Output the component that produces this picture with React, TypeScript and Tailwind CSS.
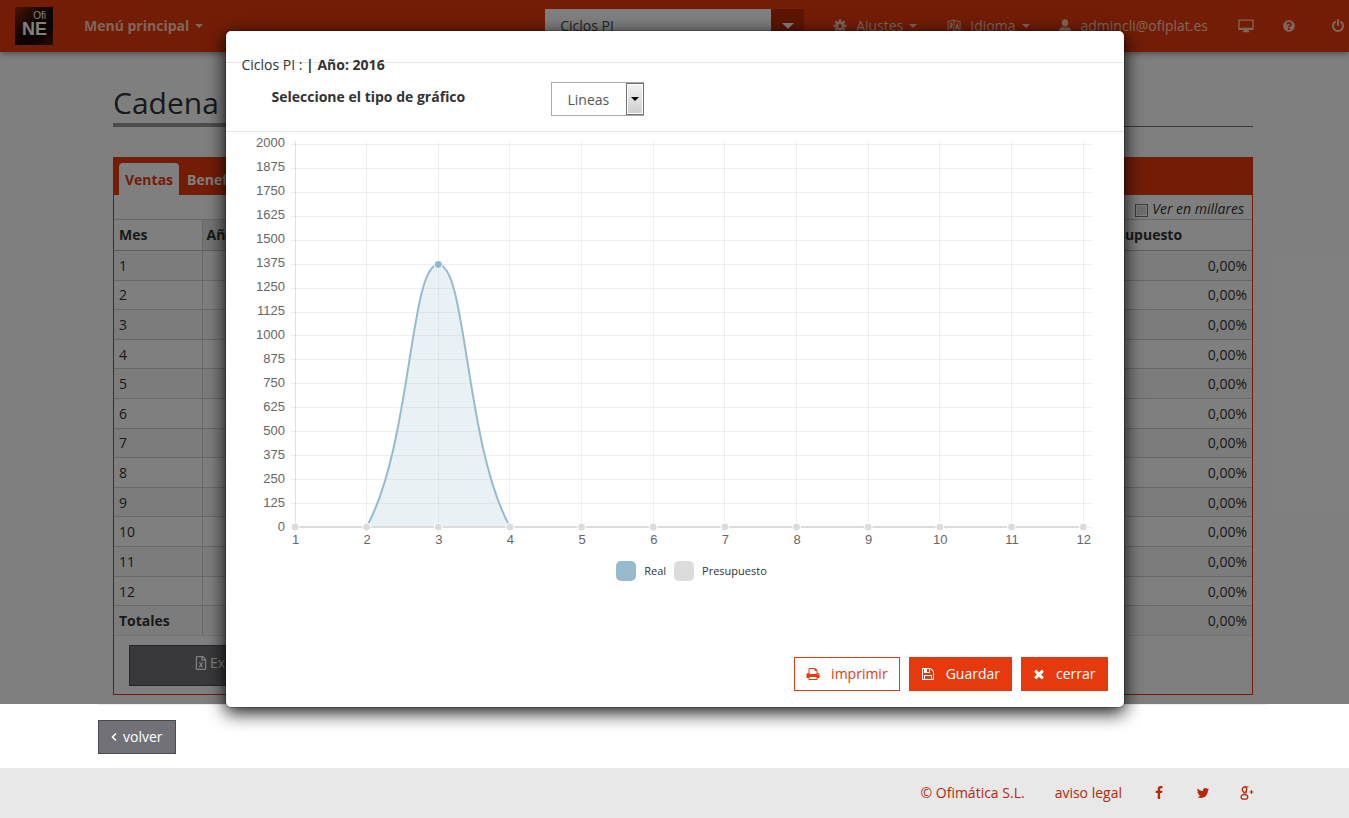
import React, { useState } from 'react';
import { FaQuestionCircle, FaRegFileExcel } from 'react-icons/fa';

const months = ['1', '2', '3', '4', '5', '6', '7', '8', '9', '10', '11', '12'];
const headings = ['Mes', 'Año', 'Presupuesto'];

// chart geometry, in the units of its own viewBox
const LEFT = 53;
const BOTTOM = 395;
const X_STEP = 71.65;
const Y_STEP = 23.94;
const ticks = Array.from({ length: 17 }, (_, i) => i * 125);
const xAt = (i: number) => LEFT + i * X_STEP;
const yAt = (value: number) => BOTTOM - (value / 125) * Y_STEP;

interface GlyphProps {
  d: string;
  className?: string;
}

const Glyph: React.FC<GlyphProps> = ({ d, className = 'size-[14px]' }) => (
  <svg viewBox="0 0 1792 1792" className={className} fill="currentColor" aria-hidden="true">
    <path d={d} />
  </svg>
);

const paths = {
  facebook:
    'M1343 12v264h-157q-86 0-116 36t-30 108v189h293l-39 296h-254v759h-306v-759h-255v-296h255v-218q0-186 104-288.5t277-102.5q147 0 228 12z',
  twitter:
    'M1684 408q-67 98-162 167 1 14 1 42 0 130-38 259.5t-115.5 248.5-184.5 210.5-258 146-323 54.5q-271 0-496-145 35 4 78 4 225 0 401-138-105-2-188-64.5t-114-159.5q33 5 61 5 43 0 85-11-112-23-185.5-111.5t-73.5-205.5v-4q68 38 146 41-66-44-105-115t-39-154q0-88 44-163 121 149 294.5 238.5t371.5 99.5q-8-38-8-74 0-134 94.5-228.5t228.5-94.5q140 0 236 102 109-21 205-78-37 115-142 178 93-10 186-50z',
  print:
    'M448 1536h896v-256h-896v256zm0-640h896v-384h-160q-40 0-68-28t-28-68v-160h-640v640zm1152 64q0-26-19-45t-45-19-45 19-19 45 19 45 45 19 45-19 19-45zm128 0v416q0 13-9.5 22.5t-22.5 9.5h-224v160q0 40-28 68t-68 28h-960q-40 0-68-28t-28-68v-160h-224q-13 0-22.5-9.5t-9.5-22.5v-416q0-79 56.5-135.5t135.5-56.5h64v-544q0-40 28-68t68-28h672q40 0 88 20t76 48l152 152q28 28 48 76t20 88v256h64q79 0 135.5 56.5t56.5 135.5z',
  save:
    'M512 1536h768v-384h-768v384zm896 0h128v-896q0-14-10-38.5t-20-34.5l-281-281q-10-10-34-20t-39-10v416q0 40-28 68t-68 28h-576q-40 0-68-28t-28-68v-416h-128v1280h128v-416q0-40 28-68t68-28h832q40 0 68 28t28 68v416zm-384-928v-320q0-13-9.5-22.5t-22.5-9.5h-192q-13 0-22.5 9.5t-9.5 22.5v320q0 13 9.5 22.5t22.5 9.5h192q13 0 22.5-9.5t9.5-22.5zm640 32v928q0 40-28 68t-68 28h-1344q-40 0-68-28t-28-68v-1344q0-40 28-68t68-28h928q40 0 88 20t76 48l280 280q28 28 48 76t20 88z',
  times:
    'M1490 1322q0 40-28 68l-136 136q-28 28-68 28t-68-28l-294-294-294 294q-28 28-68 28t-68-28l-136-136q-28-28-28-68t28-68l294-294-294-294q-28-28-28-68t28-68l136-136q28-28 68-28t68 28l294 294 294-294q28-28 68-28t68 28l136 136q28 28 28 68t-28 68l-294 294 294 294q28 28 28 68z',
  power:
    'M1664 896q0 156-61 298t-164 245-245 164-298 61-298-61-245-164-164-245-61-298q0-182 80.5-343t226.5-270q43-32 95.5-25t83.5 50q32 42 24.5 94.5t-49.5 84.5q-98 74-151.5 181t-53.5 228q0 104 40.5 198.5t109.5 163.5 163.5 109.5 198.5 40.5 198.5-40.5 163.5-109.5 109.5-163.5 40.5-198.5q0-121-53.5-228t-151.5-181q-42-32-49.5-84.5t24.5-94.5q31-43 84-50t95 25q146 109 226.5 270t80.5 343zm-640-768v640q0 52-38 90t-90 38-90-38-38-90v-640q0-52 38-90t90-38 90 38 38 90z',
};

const Caret = () => (
  <svg viewBox="0 0 8 4" className="h-1 w-2 shrink-0" fill="currentColor" aria-hidden="true">
    <path d="M0 0h8L4 4z" />
  </svg>
);

const CogIcon = () => (
  <svg viewBox="0 0 14 14" className="size-[14px]" fill="none" stroke="currentColor" aria-hidden="true">
    <circle cx="7" cy="7" r="3.3" strokeWidth="2.8" />
    <path
      d="M7 .5v2M7 11.5v2M.5 7h2M11.5 7h2M2.4 2.4l1.5 1.5M10.1 10.1l1.5 1.5M2.4 11.6l1.5-1.5M10.1 3.9l1.5-1.5"
      strokeWidth="2.4"
    />
  </svg>
);

const LanguageIcon = () => (
  <svg viewBox="0 0 14 14" className="size-[14px]" fill="none" stroke="currentColor" aria-hidden="true">
    <path d="M1 2.500l6-1.500v10.500l-6 1.500zM7 1.500l6 1v10.500l-6-2" />
    <path d="M2.500 5l3-1M4 3.500v2M5.300 5c-.5 2-1.500 3.500-3 4.500M2.800 6.500l2.600 2.500M8.800 10l1.400-5 1.600 6M9 8.500l2.400.5" strokeWidth="1.200" />
  </svg>
);

const UserIcon = () => (
  <svg viewBox="0 0 14 14" className="size-[14px]" fill="currentColor" aria-hidden="true">
    <ellipse cx="7" cy="4" rx="3.200" ry="3.700" />
    <path d="M1 13.500v-2.500c0-1.500 2-2.500 3.500-3 1 1 4 1 5 0 1.500.5 3.500 1.500 3.500 3v2.500z" />
  </svg>
);

const MonitorIcon = () => (
  <svg viewBox="0 0 16 14" className="h-[14px] w-4" fill="currentColor" aria-hidden="true">
    <path fillRule="evenodd" d="M1 .5h14a.7.7 0 0 1 .7.7v9a.7.7 0 0 1-.7.7h-4.700v1h1.200v1.300h-7v-1.300h1.200v-1H1a.7.7 0 0 1-.7-.7v-9A.7.7 0 0 1 1 .5zM1.600 1.800v7h12.800v-7z" />
  </svg>
);

const GooglePlusIcon = () => (
  <svg viewBox="0 0 14 14" className="size-[14px]" fill="none" stroke="currentColor" aria-hidden="true">
    <ellipse cx="4.500" cy="3.600" rx="2.200" ry="2.700" strokeWidth="1.300" />
    <path d="M4 .9h4.500M6 5.800c1 1 .5 1.500-.7 2.200M4.600 6.400c-1.200.8-.8 1.500.4 2.100" strokeWidth="1" />
    <ellipse cx="4.400" cy="10.900" rx="3.400" ry="2.300" strokeWidth="1.200" />
    <path d="M9.500 6h4M11.500 4v4" strokeWidth="1" />
  </svg>
);

const Logo = () => (
  <svg viewBox="0 0 38 38" className="size-[38px]" role="img" aria-label="Ofi NE">
    <defs>
      <linearGradient id="logo" x1="0" y1="0" x2="1" y2="1">
        <stop offset="0" stopColor="#8a2a12" />
        <stop offset="0.45" stopColor="#240802" />
        <stop offset="0.7" stopColor="#180400" />
        <stop offset="1" stopColor="#501808" />
      </linearGradient>
    </defs>
    <rect width="38" height="38" rx="1" fill="url(#logo)" />
    <g fill="#fff" fontFamily="Liberation Sans, sans-serif" textAnchor="end">
      <text x="31" y="12" fontSize="10">Ofi</text>
      <text x="32" y="28" fontSize="18" fontWeight="700">NE</text>
    </g>
  </svg>
);

const Navbar = () => (
  <header className="relative flex h-[52px] items-center bg-[#e63a0e] text-[#ffcdb4] shadow-[0_2px_6px_rgba(0,0,0,0.35)]">
    <a href="#inicio" className="ml-[15px]"><Logo /></a>
    <button className="ml-[31px] flex items-center gap-1.5 font-bold">
      Menú principal <Caret />
    </button>
    <div className="ml-auto flex h-[34px]">
      <input
        aria-label="Sección"
        defaultValue="Ciclos PI"
        className="w-[226px] bg-white px-[15px] text-[#444]"
      />
      <button aria-label="Abrir" className="flex w-[33px] items-center justify-center bg-[#b82a07] text-white">
        <svg viewBox="0 0 12 6" className="h-1.5 w-3" fill="currentColor"><path d="M0 0h12L6 6z" /></svg>
      </button>
    </div>
    <nav className="ml-[29px] flex items-center pr-[4px]">
      <button className="flex items-center"><CogIcon /><span className="mr-1.5 ml-[9px]">Ajustes</span><Caret /></button>
      <button className="ml-[30px] flex items-center"><LanguageIcon /><span className="mr-1.5 ml-[9px]">Idioma</span><Caret /></button>
      <a href="#usuario" className="ml-[28px] flex items-center gap-[9px]"><UserIcon />admincli@ofiplat.es</a>
      <a href="#pantalla" aria-label="Pantalla" className="ml-[30px]"><MonitorIcon /></a>
      <a href="#ayuda" aria-label="Ayuda" className="ml-[29px]"><FaQuestionCircle className="size-3" /></a>
      <a href="#salir" aria-label="Salir" className="ml-[36px]"><Glyph d={paths.power} /></a>
    </nav>
  </header>
);

const SalesTable = () => (
  <section className="mt-[30px] border border-[#e63a0e] text-[#333]">
    <div className="flex h-[37px] items-end gap-2 bg-[#e63a0e] px-[5px] font-bold">
      <button className="h-8 rounded-t bg-white px-1.5 pt-0.5 text-[#e63a0e]">Ventas</button>
      <button className="h-8 pt-0.5 text-white">Beneficios</button>
    </div>
    <label className="flex h-6 items-center justify-end gap-1 pt-1 pr-2 italic">
      <input
        type="checkbox"
        className="mt-0.5 size-[13px] appearance-none border border-[#777] bg-[#ddd] shadow-[inset_0_0_0_1px_#fff]"
      />
      Ver en millares
    </label>
    <table className="h-[417px] w-full border-collapse">
      <thead>
        <tr className="h-[31px] border-y border-[#d0d0d0] border-b-[#bbb]">
          {headings.map((heading) => (
            <th
              key={heading}
              className="border-r border-[#d0d0d0] px-1 text-left first:w-[88px] first:px-[5px] last:w-[162px] last:border-r-0 nth-2:bg-[#e6e6e6]"
            >
              {heading}
            </th>
          ))}
        </tr>
      </thead>
      <tbody>
        {[...months, 'Totales'].map((month) => (
          <tr key={month} className="border-b border-[#d0d0d0] odd:bg-[#f9f9f9] last:border-[#e6e6e6] last:font-bold">
            <td className="border-r border-[#d0d0d0] px-[5px] pt-px">{month}</td>
            <td></td>
            <td className="px-[5px] pt-px text-right font-normal">0,00%</td>
          </tr>
        ))}
      </tbody>
    </table>
    <button className="mt-[9px] mb-2 ml-[15px] flex h-[41px] w-[227px] items-center gap-0.5 border border-[#4c4b50] bg-[#727177] pb-1.5 pl-16 text-white">
      <FaRegFileExcel className="size-[14px]" /> Exportar
    </button>
  </section>
);

const LineChart = () => (
  <svg viewBox="0 0 866 415" className="block w-full" role="img" aria-label="Real y presupuesto por mes">
    <g stroke="#000" strokeOpacity="0.06" shapeRendering="crispEdges">
      {ticks.map((tick) => (
        <path key={tick} d={`M48 ${Math.round(yAt(tick)) + 0.5}H851`} />
      ))}
      {months.map((month, i) => (
        <path key={month} d={`M${xAt(i)} 9V400`} />
      ))}
      <path d="M53 9V400" />
    </g>
    <g fill="#666" fontFamily="Liberation Sans, sans-serif" fontSize="13">
      {ticks.map((tick) => (
        <text key={tick} x="43" y={yAt(tick) + 3.5} textAnchor="end">{tick}</text>
      ))}
      {months.map((month, i) => (
        <text key={month} x={xAt(i) + 0.5} y="412" textAnchor="middle">{month}</text>
      ))}
    </g>
    <path
      d="M124.600 395C170 311.600 167.700 132.500 196.300 132.500C224.900 132.500 222.600 311.600 268 395"
      fill="#97bbcd"
      fillOpacity="0.2"
      stroke="#97bbcd"
      strokeWidth="2"
    />
    <path d="M53 395H841" stroke="#dcdcdc" strokeWidth="2" />
    <g stroke="#fff">
      {months.map((month, i) => (
        <circle key={month} cx={xAt(i)} cy={BOTTOM} r="4" fill="#dcdcdc" />
      ))}
      <circle cx={xAt(2)} cy="132.500" r="4" fill="#8db8c9" />
    </g>
  </svg>
);

const ChartModal = () => {
  const [chartType, setChartType] = useState('Lineas');

  return (
    <div
      role="dialog"
      aria-label="Gráfico"
      className="mx-auto mt-[30px] w-[900px] max-w-full rounded-md border border-black/20 bg-white bg-clip-padding text-[#333] shadow-[0_5px_18px_rgba(0,0,0,0.9)]"
    >
      <div className="h-8 border-b border-[#e5e5e5]" />
      <div className="flow-root h-[69px] border-b border-[#e5e5e5] px-4">
        <p className="-mt-2">
          Ciclos PI : <strong>| Año: 2016</strong>
        </p>
        <div className="flex items-start pt-[7px] pl-[30px]">
          <label htmlFor="tipo" className="mt-[5px] w-[279px] font-bold">Seleccione el tipo de gráfico</label>
          <div className="relative h-[34px] w-[93px]">
            <select
              id="tipo"
              value={chartType}
              onChange={(e) => setChartType(e.target.value)}
              className="h-full w-full appearance-none border border-[#aaa] bg-white pt-0.5 pl-4 text-[#555]"
            >
              <option>Lineas</option>
              <option>Barras</option>
            </select>
            <span className="pointer-events-none absolute inset-y-px right-0 flex w-[18px] items-center justify-center border border-[#707070] bg-linear-to-b from-[#f2f2f2] to-[#cfcfcf] text-black shadow-[inset_0_0_0_1px_#fff]">
              <Caret />
            </span>
          </div>
        </div>
      </div>
      <div className="px-4">
        <LineChart />
      </div>
      <ul className="mt-3.5 flex items-center justify-center gap-2 pl-[34px] text-[11px]">
        <li className="flex items-center gap-2"><span className="size-5 rounded-[5px] bg-[#97bbcd]" />Real</li>
        <li className="flex items-center gap-2"><span className="size-5 rounded-[5px] bg-[#dcdcdc]" />Presupuesto</li>
      </ul>
      <div className="mt-[76px] flex justify-end gap-[9px] px-4 pb-4">
        <button className="flex h-[34px] items-center gap-[11px] border border-[#e63a0e] px-[11px] text-[#e63a0e]">
          <Glyph d={paths.print} /> imprimir
        </button>
        <button className="flex h-[34px] items-center gap-[11px] bg-[#e63a0e] px-3 text-white">
          <Glyph d={paths.save} /> Guardar
        </button>
        <button className="flex h-[34px] items-center gap-[11px] bg-[#e63a0e] px-3 text-white">
          <Glyph d={paths.times} className="-mx-px size-[14px]" /> cerrar
        </button>
      </div>
    </div>
  );
};

export default function App() {
  return (
    <div className="relative flex min-h-screen flex-col overflow-hidden bg-white font-['Open_Sans',sans-serif] text-sm">
      <div className="relative">
        <Navbar />
        <main className="mx-auto max-w-[1187px] pb-[9px] pl-[17px]">
          <div className="px-[15px] pt-[31px]">
            <h1 className="border-b border-[#777] text-[30px] leading-10 text-[#333]">
              <span className="-mb-px inline-block border-b-4 border-[#999] pr-10">Cadena</span>
            </h1>
            <SalesTable />
          </div>
        </main>
        <div className="absolute inset-0 bg-black/50" />
      </div>

      <div className="mx-auto w-full max-w-[1187px] pl-[17px]">
        <div className="border-t border-[#eee] pt-[15px] pb-[14px]">
          <button className="flex h-[34px] items-center gap-1.5 border border-[#4c4b50] bg-[#727177] px-3 text-white">
            <svg viewBox="0 0 6 8" className="h-2 w-1.5" fill="none" stroke="currentColor" strokeWidth="1.500">
              <path d="M5 .5L1.500 4 5 7.500" />
            </svg>
            volver
          </button>
        </div>
      </div>

      <footer className="grow bg-[#e8e8e8] text-[#b3290c]">
        <div className="mx-auto flex h-[50px] max-w-[1187px] items-center justify-end gap-[30px] pr-[14px] pl-[17px]">
          <a href="#ofimatica">© Ofimática S.L.</a>
          <a href="#legal">aviso legal</a>
          <a href="#facebook" aria-label="Facebook"><Glyph d={paths.facebook} /></a>
          <a href="#twitter" aria-label="Twitter"><Glyph d={paths.twitter} /></a>
          <a href="#google" aria-label="Google+"><GooglePlusIcon /></a>
        </div>
      </footer>

      <div className="absolute inset-0">
        <ChartModal />
      </div>
    </div>
  );
}
